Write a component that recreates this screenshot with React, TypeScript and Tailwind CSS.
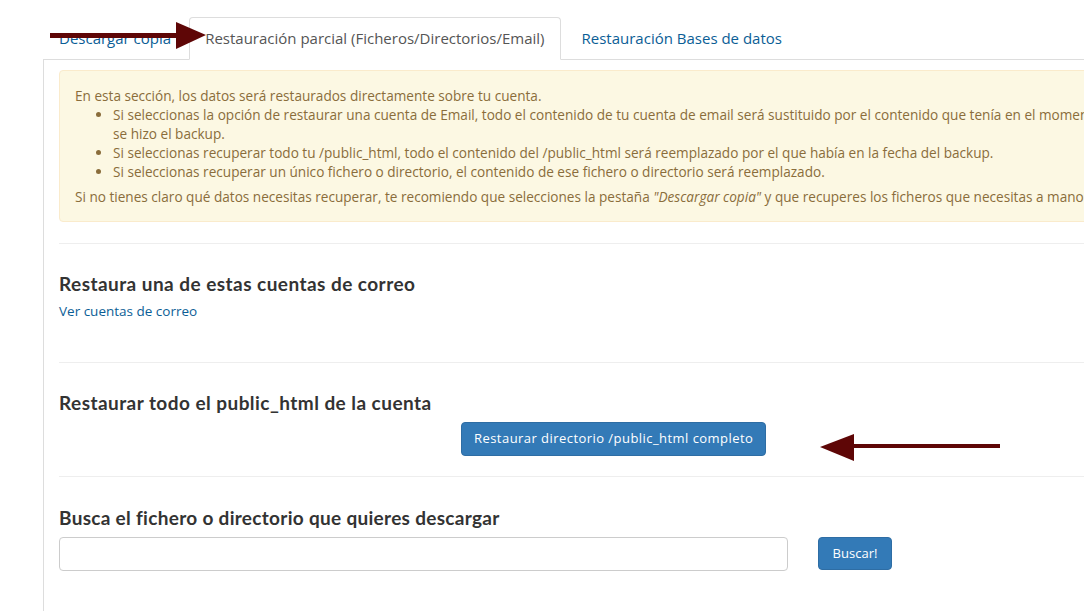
import React from "react";

const body = { fontFamily: '"Open Sans", "Noto Sans", sans-serif' };
const head = { fontFamily: 'Lato, "Open Sans", sans-serif' };

function ArrowRight() {
  return (
    <svg width="160" height="30" viewBox="0 0 160 30" className="absolute left-[48px] top-[21px]">
      <rect x="2" y="12" width="130" height="5" fill="#5e0606" />
      <polygon points="128,1 158,14 128,28" fill="#5e0606" />
    </svg>
  );
}

function ArrowLeft() {
  return (
    <svg width="184" height="30" viewBox="0 0 184 30" className="absolute left-[818px] top-[432px]">
      <rect x="30" y="12" width="152" height="4" fill="#5e0606" />
      <polygon points="2,15 36,2 36,29" fill="#5e0606" />
    </svg>
  );
}

export default function App() {
  return (
    <div className="relative w-[1084px] h-[611px] overflow-hidden bg-white" style={body}>
      <div className="w-[1300px] pl-[43px] pt-[17px]">
        <ul className="flex border-b border-[#ddd] text-[15px]">
          <li className="mr-[2px] -mb-px">
            <a className="block px-[15px] py-[10px] leading-[21px] text-[#0b5e96] border border-transparent rounded-t">
              Descargar copia
            </a>
          </li>
          <li className="mr-[2px] -mb-px">
            <a className="block px-[15px] py-[10px] leading-[21px] text-[#555] bg-white border border-[#ddd] border-b-transparent rounded-t">
              Restauración parcial (Ficheros/Directorios/Email)
            </a>
          </li>
          <li className="mr-[2px] -mb-px">
            <a className="block px-[18px] py-[10px] leading-[21px] text-[#0b5e96] border border-transparent rounded-t">
              Restauración Bases de datos
            </a>
          </li>
        </ul>
        <div className="border-l border-[#ddd] px-[15px] pt-[10px] h-[560px]">
          <div className="bg-[#fcf8e3] border border-[#faebcc] rounded text-[#8a6d3b] text-[13.6px] leading-[19px] px-[15px] py-[15px]">
            <p>En esta sección, los datos será restaurados directamente sobre tu cuenta.</p>
            <ul className="list-disc pl-[38px]">
              <li>
                Si seleccionas la opción de restaurar una cuenta de Email, todo el contenido de tu cuenta de email será sustituido por el contenido que tenía en el momento en que
                <br />
                se hizo el backup.
              </li>
              <li>Si seleccionas recuperar todo tu /public_html, todo el contenido del /public_html será reemplazado por el que había en la fecha del backup.</li>
              <li>Si seleccionas recuperar un único fichero o directorio, el contenido de ese fichero o directorio será reemplazado.</li>
            </ul>
            <p className="mt-[6px] whitespace-nowrap">
              Si no tienes claro qué datos necesitas recuperar, te recomiendo que selecciones la pestaña <i>"Descargar copia"</i> y que recuperes los ficheros que necesitas a mano.
            </p>
          </div>

          <hr className="mt-[21px] border-t border-[#eee]" />
          <h3 className="mt-[29px] text-[19px] leading-[22px] font-bold tracking-[0.45px] text-[#333]" style={head}>
            Restaura una de estas cuentas de correo
          </h3>
          <a className="block mt-[7px] text-[13.5px] leading-[19px] text-[#0b5e96]">Ver cuentas de correo</a>

          <hr className="mt-[41px] border-t border-[#eee]" />
          <h3 className="mt-[29px] text-[19px] leading-[22px] font-bold tracking-[0.45px] text-[#333]" style={head}>
            Restaurar todo el public_html de la cuenta
          </h3>
          <div className="flex mt-[8px]">
            <button className="ml-[402px] h-[34px] px-[12px] bg-[#337ab7] border border-[#2e6da4] rounded text-white text-[13px] tracking-[0.45px]">
              Restaurar directorio /public_html completo
            </button>
          </div>

          <hr className="mt-[20px] border-t border-[#eee]" />
          <h3 className="mt-[30px] text-[19px] leading-[22px] font-bold tracking-[0.3px] text-[#333]" style={head}>
            Busca el fichero o directorio que quieres descargar
          </h3>
          <div className="flex items-start mt-[8px]">
            <input className="w-[729px] h-[34px] border border-[#ccc] rounded bg-white" />
            <button className="ml-[30px] h-[33px] w-[74px] bg-[#337ab7] border border-[#2e6da4] rounded text-white text-[13px]">
              Buscar!
            </button>
          </div>
        </div>
      </div>
      <ArrowRight />
      <ArrowLeft />
    </div>
  );
}
